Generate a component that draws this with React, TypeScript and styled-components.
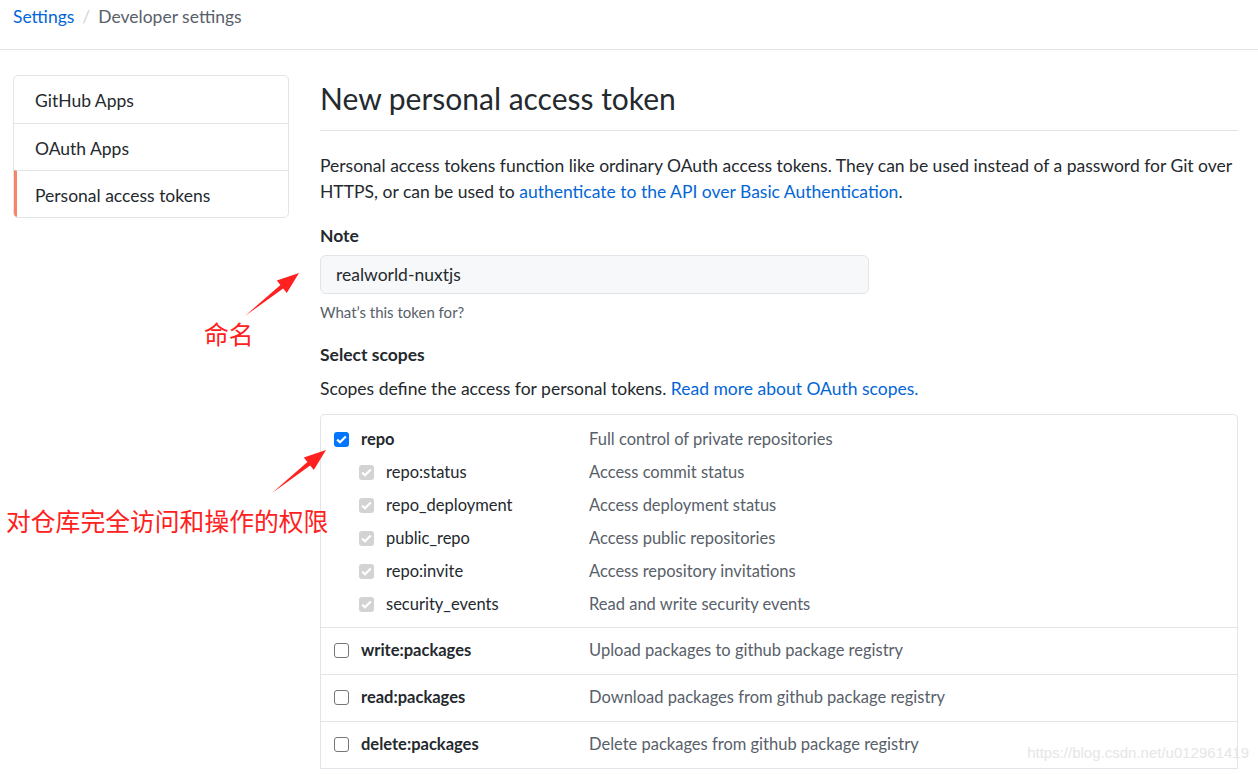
import styled, { createGlobalStyle } from 'styled-components'

const GlobalStyle = createGlobalStyle`
  html, body {
    margin: 0;
    padding: 0;
    background: #fff;
  }
  body {
    font-family: Lato, "Noto Sans", "Liberation Sans", sans-serif;
    color: #24292e;
    width: 1258px;
    height: 774px;
    overflow: hidden;
  }
`

const SUB_SCOPES = [
  { name: 'repo:status', desc: 'Access commit status' },
  { name: 'repo_deployment', desc: 'Access deployment status' },
  { name: 'public_repo', desc: 'Access public repositories' },
  { name: 'repo:invite', desc: 'Access repository invitations' },
  { name: 'security_events', desc: 'Read and write security events' },
]

const PACKAGE_SCOPES = [
  { name: 'write:packages', desc: 'Upload packages to github package registry' },
  { name: 'read:packages', desc: 'Download packages from github package registry' },
  { name: 'delete:packages', desc: 'Delete packages from github package registry' },
]

const NAV = ['GitHub Apps', 'OAuth Apps', 'Personal access tokens']

const Page = styled.div`
  position: relative;
  width: 1258px;
  height: 774px;
  overflow: hidden;
`

const Breadcrumb = styled.div`
  height: 50px;
  box-sizing: border-box;
  padding: 6px 0 0 13px;
  font-size: 17.5px;
  color: #586069;
  border-bottom: 1px solid #e1e4e8;
`

const Crumb = styled.a`
  color: #0366d6;
  text-decoration: none;
`

const Sep = styled.span`
  color: #d1d5da;
  margin: 0 8px;
`

const Layout = styled.div`
  display: flex;
  padding: 25px 20px 0 13px;
  gap: 31px;
`

const Sidebar = styled.nav`
  width: 276px;
  flex: none;
  align-self: flex-start;
  border: 1px solid #e1e4e8;
  border-radius: 5px;
  box-sizing: border-box;
  overflow: hidden;
`

const NavItem = styled.div<{ $active?: boolean }>`
  height: 47px;
  box-sizing: border-box;
  display: flex;
  align-items: center;
  padding-top: 2px;
  padding-left: ${p => (p.$active ? '18px' : '21px')};
  font-size: 17.5px;
  color: #24292e;
  border-left: ${p => (p.$active ? '3px solid #f9826c' : 'none')};
  & + & {
    border-top: 1px solid #e1e4e8;
  }
`

const Main = styled.main`
  flex: 1;
  width: 918px;
`

const Title = styled.h1`
  margin: 0;
  font-size: 30px;
  font-weight: 400;
  line-height: 1.25;
  padding: 5px 0 12px;
  border-bottom: 1px solid #e1e4e8;
`

const Lead = styled.p`
  margin: 22px 0 0;
  font-size: 17.5px;
  line-height: 26px;
`

const Link = styled.a`
  color: #0366d6;
  text-decoration: none;
`

const Label = styled.div<{ $gap?: number }>`
  margin-top: ${p => p.$gap ?? 18}px;
  font-size: 17.5px;
  font-weight: 700;
  line-height: 26px;
`

const Input = styled.div`
  margin-top: 6px;
  width: 549px;
  height: 39px;
  box-sizing: border-box;
  display: flex;
  align-items: center;
  padding-left: 15px;
  background: #f6f8fa;
  border: 1px solid #e1e4e8;
  border-radius: 6px;
  font-size: 17.5px;
  color: #24292e;
`

const Hint = styled.div`
  margin-top: 9px;
  font-size: 15px;
  color: #586069;
`

const Desc = styled.p`
  margin: 8px 0 0;
  font-size: 17.5px;
  line-height: 26px;
`

const ScopeBox = styled.div`
  margin-top: 12px;
  border: 1px solid #e1e4e8;
  border-radius: 5px 5px 0 0;
  border-bottom: none;
`

const ScopeGroup = styled.div<{ $single?: boolean }>`
  padding: ${p => (p.$single ? '6px 0 7px' : '8px 0 6px')};
  border-bottom: 1px solid #e1e4e8;
`

const ScopeRow = styled.div<{ $sub?: boolean }>`
  display: flex;
  align-items: center;
  height: 33px;
  padding-left: ${p => (p.$sub ? '38px' : '13px')};
`

const ScopeName = styled.span<{ $sub?: boolean }>`
  width: ${p => (p.$sub ? '203px' : '228px')};
  margin-left: 12px;
  font-size: 16.5px;
  font-weight: ${p => (p.$sub ? 400 : 700)};
  color: #24292e;
`

const ScopeDesc = styled.span`
  font-size: 16.5px;
  color: #586069;
`

const Box = styled.span<{ $state: 'on' | 'off' | 'disabled' }>`
  width: 15px;
  height: 15px;
  flex: none;
  box-sizing: border-box;
  border-radius: 3px;
  display: inline-flex;
  align-items: center;
  justify-content: center;
  background: ${p =>
    p.$state === 'on' ? '#0075ff' : p.$state === 'disabled' ? '#d3d3d3' : '#fff'};
  border: ${p => (p.$state === 'off' ? '1px solid #767676' : 'none')};
`

const Note = styled.div<{ $x: number; $y: number }>`
  position: absolute;
  left: ${p => p.$x}px;
  top: ${p => p.$y}px;
  color: #ff2020;
  font-size: 24.8px;
  line-height: 1;
  font-family: "Noto Sans CJK SC", sans-serif;
  white-space: nowrap;
`

const Arrows = styled.svg`
  position: absolute;
  left: 0;
  top: 0;
  pointer-events: none;
`

const Watermark = styled.div`
  position: absolute;
  right: 9px;
  top: 744px;
  font-family: "Liberation Sans", Arial, sans-serif;
  font-size: 15px;
  color: #e6e6e6;
`

const Check = ({ state }: { state: 'on' | 'off' | 'disabled' }) => (
  <Box $state={state}>
    {state !== 'off' && (
      <svg width="11" height="9" viewBox="0 0 11 9">
        <path d="M1.2 4.6 L4 7.3 L9.8 1.4" fill="none" stroke="#fff" strokeWidth="2.2" />
      </svg>
    )}
  </Box>
)

const Arrow = ({ x1, y1, x2, y2 }: { x1: number; y1: number; x2: number; y2: number }) => {
  const dx = x2 - x1
  const dy = y2 - y1
  const len = Math.hypot(dx, dy)
  const ux = dx / len
  const uy = dy / len
  const nx = -uy
  const ny = ux
  const head = 22
  const hw = 8
  const bx = x2 - ux * head
  const by = y2 - uy * head
  const sw = 2.2
  const pts = [
    [x1, y1],
    [bx + nx * sw, by + ny * sw],
    [bx + nx * hw, by + ny * hw],
    [x2, y2],
    [bx - nx * hw, by - ny * hw],
    [bx - nx * sw, by - ny * sw],
  ]
  return <polygon points={pts.map(p => p.join(',')).join(' ')} fill="#ff2020" />
}

export default function App() {
  return (
    <Page>
      <GlobalStyle />
      <Breadcrumb>
        <Crumb>Settings</Crumb>
        <Sep>/</Sep>
        Developer settings
      </Breadcrumb>
      <Layout>
        <Sidebar>
          {NAV.map((n, i) => (
            <NavItem key={n} $active={i === 2}>
              {n}
            </NavItem>
          ))}
        </Sidebar>
        <Main>
          <Title>New personal access token</Title>
          <Lead>
            Personal access tokens function like ordinary OAuth access tokens. They can be used
            instead of a password for Git over HTTPS, or can be used to{' '}
            <Link>authenticate to the API over Basic Authentication</Link>.
          </Lead>
          <Label>Note</Label>
          <Input>realworld-nuxtjs</Input>
          <Hint>What’s this token for?</Hint>
          <Label $gap={21}>Select scopes</Label>
          <Desc>
            Scopes define the access for personal tokens.{' '}
            <Link>Read more about OAuth scopes.</Link>
          </Desc>
          <ScopeBox>
            <ScopeGroup>
              <ScopeRow>
                <Check state="on" />
                <ScopeName>repo</ScopeName>
                <ScopeDesc>Full control of private repositories</ScopeDesc>
              </ScopeRow>
              {SUB_SCOPES.map(s => (
                <ScopeRow key={s.name} $sub>
                  <Check state="disabled" />
                  <ScopeName $sub>{s.name}</ScopeName>
                  <ScopeDesc>{s.desc}</ScopeDesc>
                </ScopeRow>
              ))}
            </ScopeGroup>
            {PACKAGE_SCOPES.map(s => (
              <ScopeGroup key={s.name} $single>
                <ScopeRow>
                  <Check state="off" />
                  <ScopeName>{s.name}</ScopeName>
                  <ScopeDesc>{s.desc}</ScopeDesc>
                </ScopeRow>
              </ScopeGroup>
            ))}
          </ScopeBox>
        </Main>
      </Layout>
      <Arrows width="1258" height="774">
        <Arrow x1={245} y1={316} x2={299} y2={273} />
        <Arrow x1={272} y1={493} x2={326} y2={450} />
      </Arrows>
      <Note $x={204} $y={321}>命名</Note>
      <Note $x={6} $y={508}>对仓库完全访问和操作的权限</Note>
      <Watermark>https://blog.csdn.net/u012961419</Watermark>
    </Page>
  )
}
